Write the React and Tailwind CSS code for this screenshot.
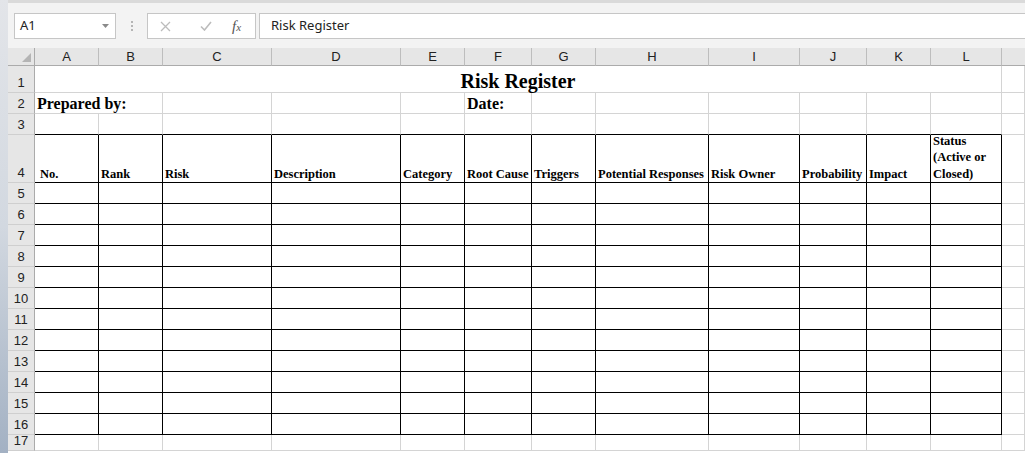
import React from "react";

const COLS = ["A", "B", "C", "D", "E", "F", "G", "H", "I", "J", "K", "L", ""];
const HEADERS = [
  "No.",
  "Rank",
  "Risk",
  "Description",
  "Category",
  "Root Cause",
  "Triggers",
  "Potential Responses",
  "Risk Owner",
  "Probability",
  "Impact",
];

const serif = { fontFamily: '"Liberation Serif", "Times New Roman", serif' };
const sans = { fontFamily: '"Liberation Sans", Arial, sans-serif' };

function RowHead({ n }) {
  return (
    <div
      className="flex items-end justify-center border-r border-b border-r-[#ababab] border-b-[#cfcfcf] bg-[#e6e6e6] pb-[3px] text-[13px] leading-none text-[#222]"
      style={sans}
    >
      {n}
    </div>
  );
}

function Cell({ r, c, children, className = "" }) {
  // r: sheet row number, c: 0..12 column index (12 = beyond L)
  const inTable = c < 12;
  let right = "border-r-[#d4d4d4]";
  let bottom = "border-b-[#d4d4d4]";
  if (inTable && r >= 4 && r <= 16) {
    right = "border-r-black";
    bottom = "border-b-black";
  }
  if (inTable && r === 3) bottom = "border-b-black";
  return <div className={`border-r border-b ${right} ${bottom} ${className}`}>{children}</div>;
}

export default function App() {
  const rows = [];
  for (let r = 5; r <= 17; r++) rows.push(r);

  return (
    <div className="flex h-[453px] w-[1025px] overflow-hidden bg-white">
      <div className="w-[8px] shrink-0 bg-gradient-to-b from-[#e3e5e9] via-[#d2d8e0] to-[#a3b1c3]" />
      <div className="flex min-w-0 flex-1 flex-col">
        {/* formula bar */}
        <div className="flex h-[48px] shrink-0 items-start border-t-[3px] border-t-[#dadada] bg-[#f3f3f3] pt-[10px]">
          <div className="ml-[6px] flex h-[26px] w-[102px] items-center justify-between border border-[#c6c6c6] bg-white pl-[5px] pr-[6px]">
            <span className="text-[13px] text-[#222]" style={{ fontFamily: '"Noto Sans", sans-serif' }}>
              A1
            </span>
            <svg width="7" height="4" viewBox="0 0 7 4">
              <path d="M0 0h7L3.5 4z" fill="#8a8a8a" />
            </svg>
          </div>
          <div className="flex h-[26px] w-[31px] flex-col items-center justify-center gap-[2px]">
            <span className="h-[2px] w-[2px] bg-[#b5b5b5]" />
            <span className="h-[2px] w-[2px] bg-[#b5b5b5]" />
            <span className="h-[2px] w-[2px] bg-[#b5b5b5]" />
          </div>
          <div className="flex h-[26px] w-[109px] items-center border border-[#c6c6c6] bg-white">
            <svg className="ml-[12px]" width="11" height="11" viewBox="0 0 11 11">
              <path d="M1 1l9 9M10 1l-9 9" stroke="#bcbcbc" strokeWidth="1.3" />
            </svg>
            <svg className="ml-[29px]" width="12" height="10" viewBox="0 0 12 10">
              <path d="M1 5.5l3.5 3.5L11 1" stroke="#bcbcbc" strokeWidth="1.6" fill="none" />
            </svg>
            <span
              className="ml-[20px] text-[15px] italic leading-none text-[#555]"
              style={serif}
            >
              f<span className="text-[11px]">x</span>
            </span>
          </div>
          <div className="ml-[3px] flex h-[26px] flex-1 items-center border-y border-l border-[#c6c6c6] bg-white pl-[11px]">
            <span className="text-[13px] text-[#222]" style={{ fontFamily: '"Noto Sans", sans-serif' }}>
              Risk Register
            </span>
          </div>
        </div>

        {/* sheet */}
        <div
          className="grid flex-1 bg-white"
          style={{
            gridTemplateColumns:
              "27px 64px 64px 109px 129px 64px 67px 64px 113px 91px 67px 64px 71px 1fr",
            gridTemplateRows: "18px 27px 21px 21px 48px repeat(12, 21px) 16px",
          }}
        >
          {/* column headers */}
          <div className="relative border-r border-b border-r-[#ababab] border-b-[#ababab] bg-[#e6e6e6]">
            <svg className="absolute right-[3px] bottom-[3px]" width="9" height="9" viewBox="0 0 9 9">
              <path d="M9 0v9H0z" fill="#b4b4b4" />
            </svg>
          </div>
          {COLS.map((l, i) => (
            <div
              key={i}
              className={`flex items-center justify-center border-b border-b-[#ababab] bg-[#e6e6e6] text-[13px] leading-none text-[#222] ${
                i < 12 ? "border-r border-r-[#bdbdbd]" : ""
              }`}
              style={sans}
            >
              {l}
            </div>
          ))}

          {/* row 1 */}
          <RowHead n={1} />
          <div
            className="col-span-12 flex items-end justify-center border-r border-b border-[#d4d4d4] pb-[1px] text-[20px] font-bold leading-none text-black"
            style={serif}
          >
            Risk Register
          </div>
          <Cell r={1} c={12} />

          {/* row 2 */}
          <RowHead n={2} />
          <div
            className="flex items-end overflow-visible whitespace-nowrap border-b border-b-[#d4d4d4] pb-[1px] pl-[2px] text-[16px] font-bold leading-none text-black"
            style={serif}
          >
            Prepared by:
          </div>
          {COLS.slice(1).map((_, j) => {
            const c = j + 1;
            return (
              <Cell
                key={c}
                r={2}
                c={c}
                className="flex items-end whitespace-nowrap pb-[1px] pl-[2px] text-[16px] font-bold leading-none text-black"
              >
                <span style={serif}>{c === 5 ? "Date:" : ""}</span>
              </Cell>
            );
          })}

          {/* row 3 */}
          <RowHead n={3} />
          {COLS.map((_, c) => (
            <Cell key={c} r={3} c={c} />
          ))}

          {/* row 4 */}
          <RowHead n={4} />
          {COLS.map((_, c) => (
            <Cell
              key={c}
              r={4}
              c={c}
              className={`flex items-end pb-0 text-[12.5px] font-bold leading-[16.5px] text-black ${
                c === 0 ? "pl-[5px]" : "pl-[2px]"
              }`}
            >
              {c < 11 && (
                <span className="whitespace-nowrap" style={serif}>
                  {HEADERS[c]}
                </span>
              )}
              {c === 11 && (
                <span style={serif}>
                  Status
                  <br />
                  (Active or
                  <br />
                  Closed)
                </span>
              )}
            </Cell>
          ))}

          {/* rows 5..17 */}
          {rows.map((r) => (
            <React.Fragment key={r}>
              <RowHead n={r} />
              {COLS.map((_, c) => (
                <Cell key={c} r={r} c={c} />
              ))}
            </React.Fragment>
          ))}
        </div>
      </div>
    </div>
  );
}
